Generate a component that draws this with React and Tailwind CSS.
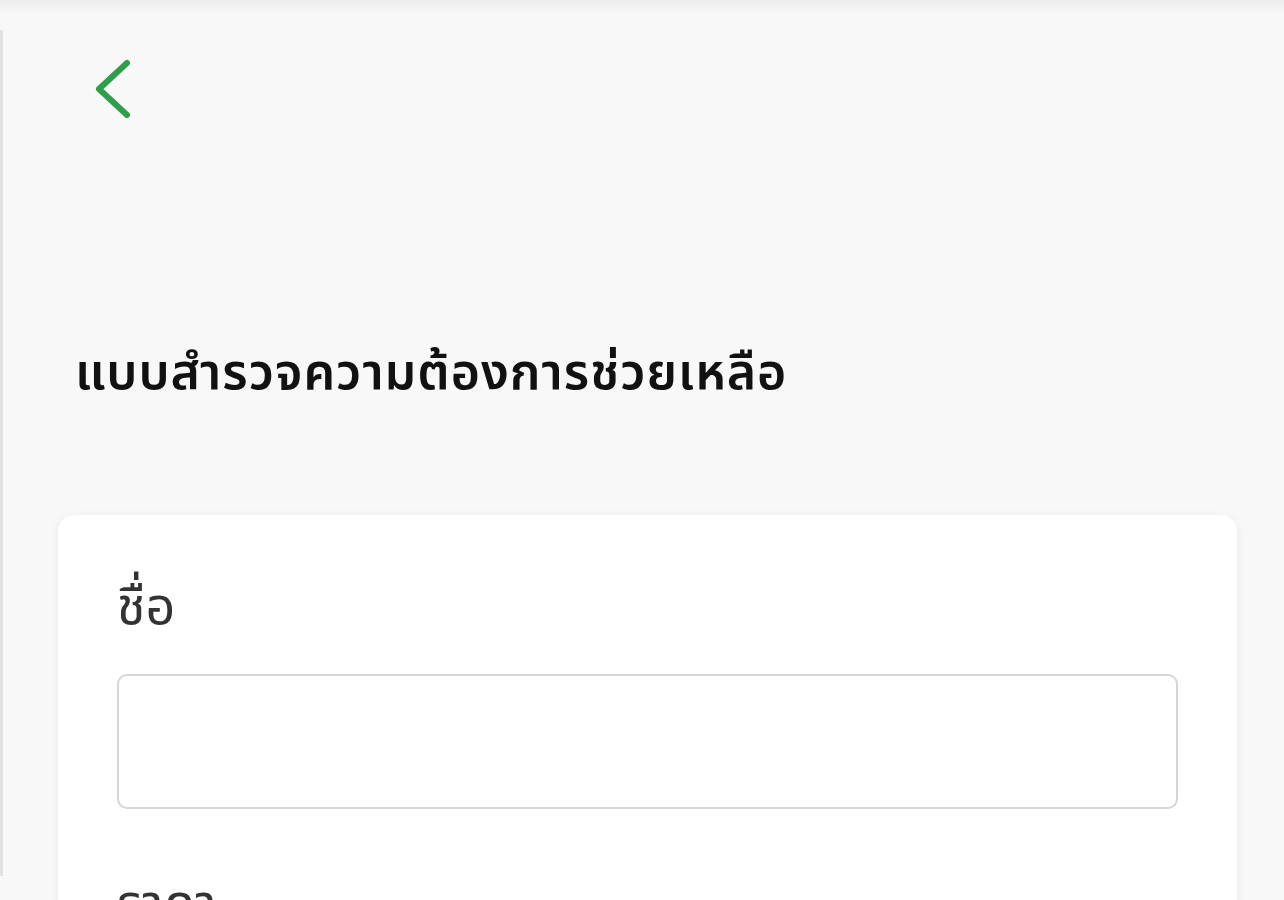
export default function App() {
  return (
    <div
      className="relative h-[900px] overflow-hidden bg-[#f8f8f8]"
      style={{ fontFamily: '"Noto Sans Thai", "Noto Sans", "Liberation Sans", sans-serif' }}
    >
      {/* top shade */}
      <div className="h-[14px] bg-gradient-to-b from-[#ececec] to-[#f8f8f8]" />

      <div className="flex h-full">
        {/* left frame line */}
        <div className="w-[3px] mt-[16px] h-[846px] bg-[#e2e2e2]" />

        <div className="flex-1 flex flex-col">
          {/* Back */}
          <button className="ml-[86px] mt-[43px] w-[48px] h-[70px] flex items-center">
            <svg width="44" height="64" viewBox="0 0 44 64" fill="none">
              <path d="M38 6 L10 32 L38 58" stroke="#2f9e4a" strokeWidth="6" strokeLinecap="round" strokeLinejoin="round" />
            </svg>
          </button>

          <h1 className="ml-[72px] mt-[222px] text-[50px] leading-[62px] tracking-[1px] font-semibold text-[#111]">
            แบบสำรวจความต้องการช่วยเหลือ
          </h1>

          {/* Form card */}
          <div className="ml-[55px] mr-[47px] mt-[110px] bg-white rounded-[16px] shadow-[0_2px_10px_rgba(0,0,0,0.07)] px-[59px] pt-[60px] flex flex-col">
            <label className="text-[52px] leading-[66px] text-[#333]">ชื่อ</label>
            <input className="mt-[33px] h-[135px] rounded-[10px] border-2 border-[#d6d6d6] px-4 text-[32px] outline-none" />
            <label className="mt-[63px] text-[52px] leading-[66px] text-[#333]">ราคา</label>
            <input className="mt-[33px] h-[135px] rounded-[10px] border-2 border-[#d6d6d6] px-4 text-[32px] outline-none" />
          </div>
        </div>
      </div>
    </div>
  )
}
